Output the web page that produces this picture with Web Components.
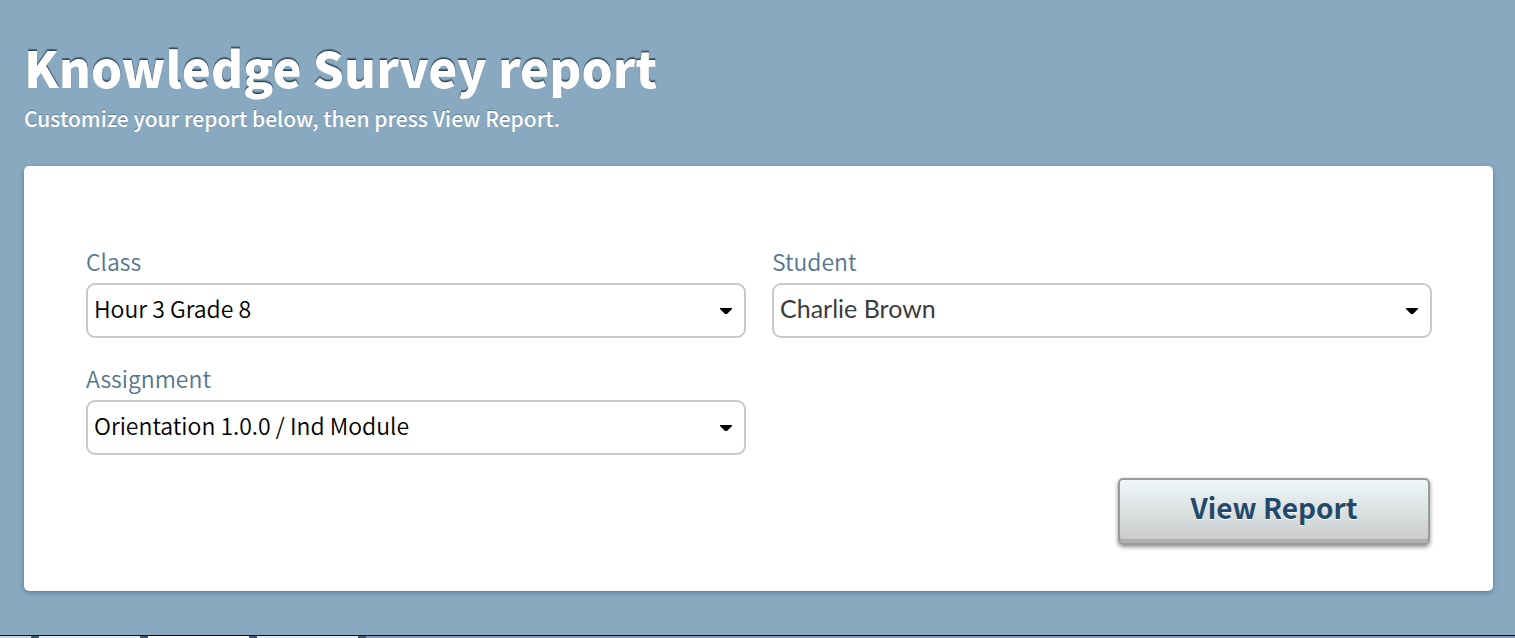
<!DOCTYPE html>
<html lang="en">
<head>
<meta charset="utf-8">
<meta name="viewport" content="width=device-width, initial-scale=1">
<title>Knowledge Survey report</title>
<style>
  html, body { margin: 0; }
  body {
    font-family: "Noto Sans CJK SC", "Open Sans", sans-serif;
    background: #88a9c0;
  }
</style>
</head>
<body>
<report-page>
  <page-heading slot="heading">
    Knowledge Survey report
    <span slot="hint">Customize your report below, then press View Report.</span>
  </page-heading>
  <report-card>
    <select-field name="class" value="Hour 3 Grade 8">Class</select-field>
    <select-field name="student" value="Charlie Brown" class="person">Student</select-field>
    <select-field name="assignment" value="Orientation 1.0.0 / Ind Module">Assignment</select-field>
    <push-button slot="action">View Report</push-button>
  </report-card>
  <tab-strip slot="footer"></tab-strip>
</report-page>

<script>
const define = (name, html, setup) => {
  const template = document.createElement('template');
  template.innerHTML = html;
  customElements.define(name, class extends HTMLElement {
    constructor() {
      super();
      this.attachShadow({ mode: 'open' }).append(template.content.cloneNode(true));
    }
    connectedCallback() { if (setup) setup(this, this.shadowRoot); }
  });
};

define('report-page', `
  <style>
    :host { display: flex; flex-direction: column; min-height: 100vh; }
    main { flex: 1; padding: 30px 22px 44px 24px; }
  </style>
  <main><slot name="heading"></slot><slot></slot></main>
  <slot name="footer"></slot>`);

define('page-heading', `
  <style>
    :host { display: block; color: #fff; margin-bottom: 34px; }
    h1 {
      margin: 0; font-size: 49px; line-height: 74px; font-weight: 900;
      text-shadow: 0 -1px 0 #2f4554, 0 -2px 1px #4d6779;
    }
    p { margin: 0; font-size: 21px; line-height: 28px; font-weight: 500; text-shadow: 0 -1px 0 #5d7d95; }
  </style>
  <h1><slot></slot></h1>
  <p><slot name="hint"></slot></p>`);

define('report-card', `
  <style>
    :host {
      display: block; background: #fff; border-radius: 5px;
      padding: 79px 61px 46px 62px;
      box-shadow: 0 1px 1px #6f8596, 0 2px 5px rgba(40, 70, 100, .4);
    }
    .fields { display: grid; grid-template-columns: 1fr 1fr; gap: 24px 26px; }
    .actions { display: flex; justify-content: flex-end; padding: 23px 2px 0 0; }
  </style>
  <form>
    <div class="fields"><slot></slot></div>
    <div class="actions"><slot name="action"></slot></div>
  </form>`);

define('select-field', `
  <style>
    :host { display: flex; flex-direction: column; gap: 6px; min-width: 0; }
    label { font-size: 23px; line-height: 32px; color: #55758f; font-weight: 350; }
    .box { display: grid; align-items: center; }
    select, svg { grid-area: 1 / 1; }
    select {
      appearance: none; box-sizing: border-box; width: 100%; height: 55px; margin: 0;
      padding: 0 32px 6px 6px; border: 2px solid #c9c9c9; border-radius: 9px;
      background: #fff; color: #000; font: inherit; font-size: 23px; font-weight: 350;
    }
    :host(.person) select { font-family: Lato, sans-serif; font-size: 25px; font-weight: 400; color: #3c3c3c; }
    svg { justify-self: end; margin-right: 13px; pointer-events: none; }
  </style>
  <label for="control"><slot></slot></label>
  <div class="box">
    <select id="control"></select>
    <svg width="14" height="8" viewBox="0 0 14 8" aria-hidden="true"><path d="M1 1h12v1l-5 5H6L1 2z"/></svg>
  </div>`, (host, root) => {
  const select = root.querySelector('select');
  select.name = host.getAttribute('name');
  select.replaceChildren(new Option(host.getAttribute('value')));
});

define('push-button', `
  <style>
    :host { display: block; }
    button {
      box-sizing: border-box; width: 312px; height: 67px; margin: 0; padding: 0 0 10px;
      border: 2px solid #999; border-radius: 5px;
      background: linear-gradient(#eef6f8, #dbe1e1 50%, #c9c9c9);
      box-shadow: inset 0 -4px 0 #b0b0b0, 0 2px 4px rgba(0, 0, 0, .45);
      color: #22486a; font: inherit; font-size: 28px; font-weight: 700;
      text-shadow: 0 1px 0 #fff;
    }
  </style>
  <button type="button"><slot></slot></button>`);

define('tab-strip', `
  <style>
    :host { display: flex; height: 2px; gap: 8px; border-top: 1px solid #0c1018; background: #4a5664; }
    i { width: 101px; background: #e6edf2; }
    i:first-of-type { width: 31px; background: #ccd7df; }
    i:nth-of-type(3) { background: #fff; }
    i:last-of-type { flex: 1; background: #8798b8; }
  </style>
  <i></i><i></i><i></i><i></i><i></i>`);
</script>
</body>
</html>
